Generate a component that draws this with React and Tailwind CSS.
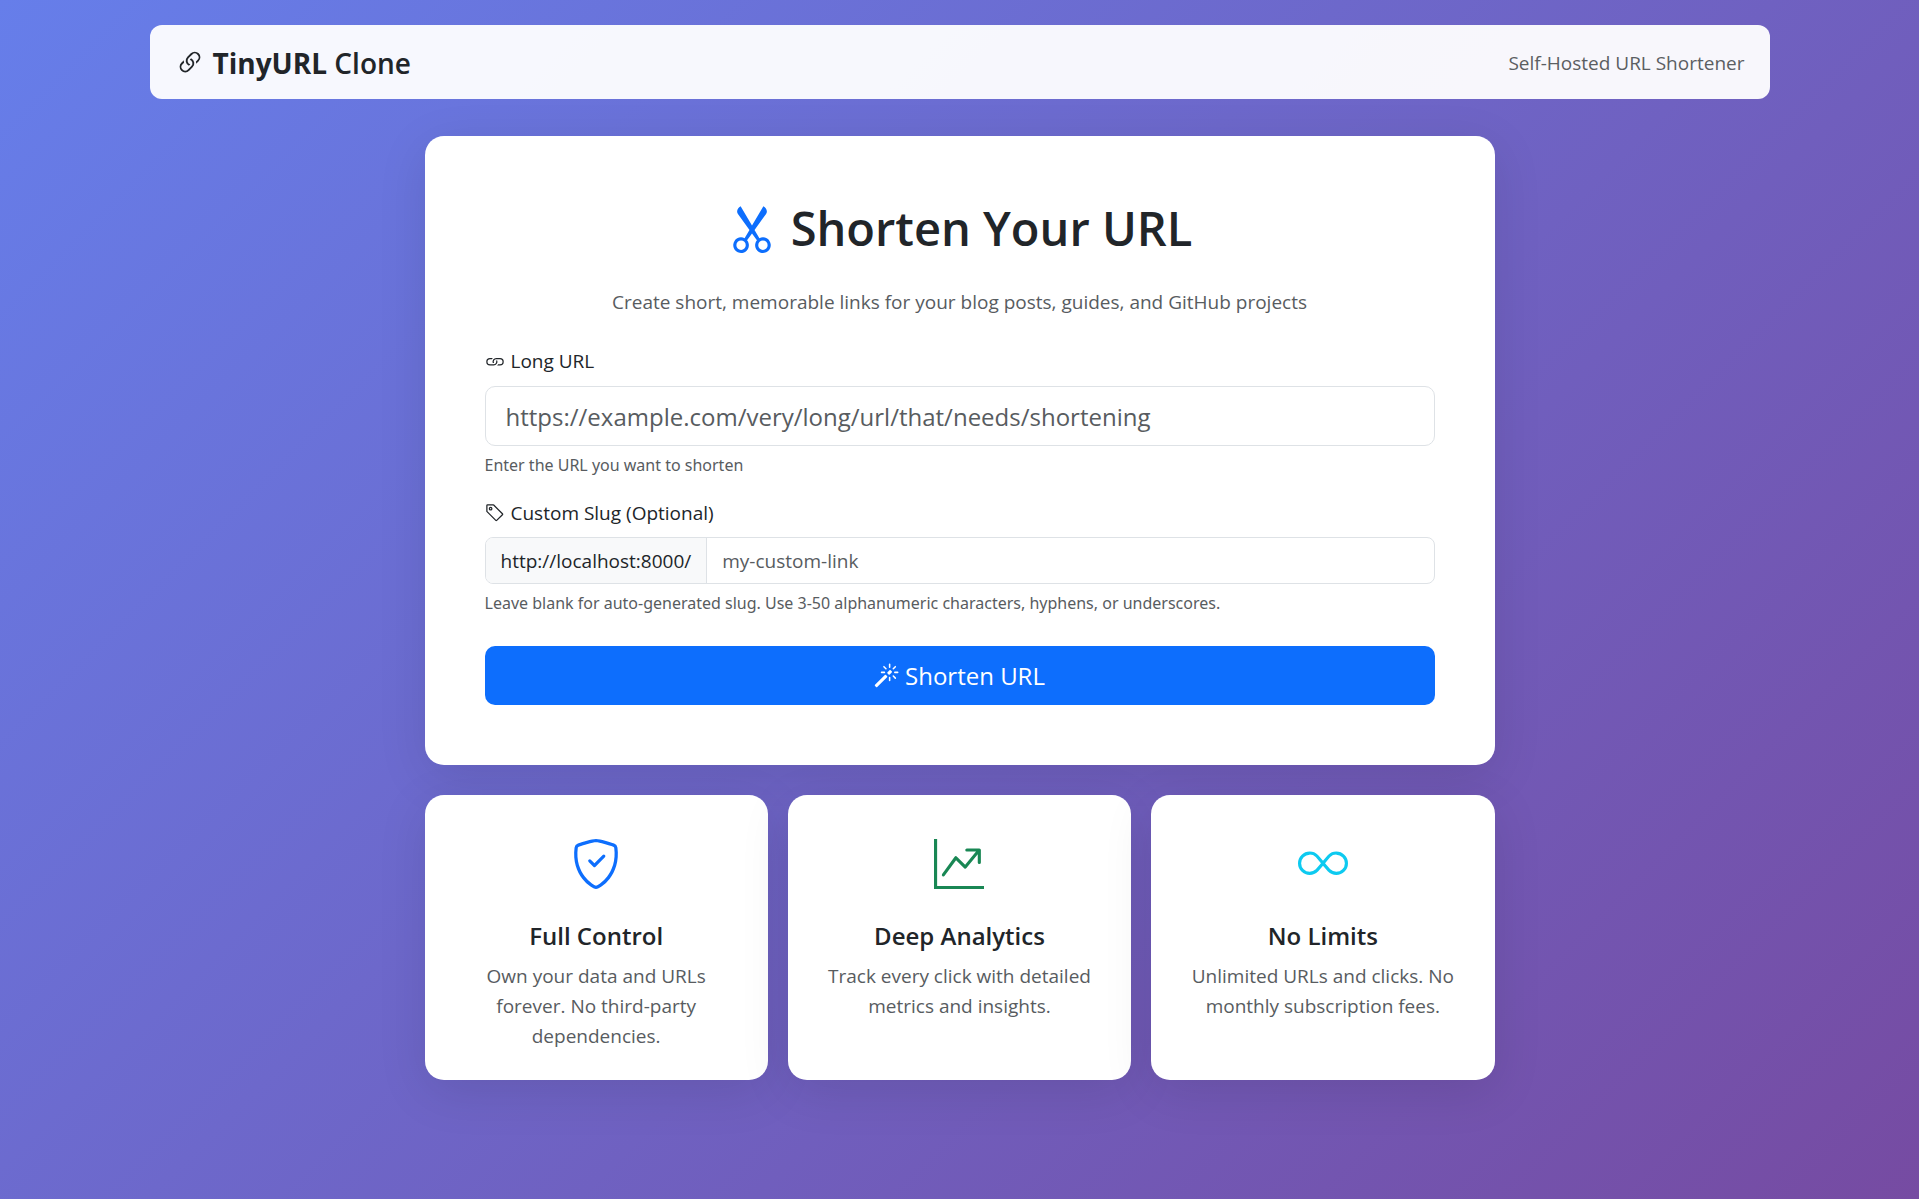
import { useState } from "react";
import {
  BsGraphUpArrow,
  BsInfinity,
  BsLink,
  BsLink45Deg,
  BsMagic,
  BsScissors,
  BsShieldCheck,
  BsTag,
} from "react-icons/bs";

const features = [
  {
    title: "Full Control",
    text: "Own your data and URLs forever. No third-party dependencies.",
    icon: BsShieldCheck,
    color: "text-[#0d6efd]",
  },
  {
    title: "Deep Analytics",
    text: "Track every click with detailed metrics and insights.",
    icon: BsGraphUpArrow,
    color: "text-[#198754]",
  },
  {
    title: "No Limits",
    text: "Unlimited URLs and clicks. No monthly subscription fees.",
    icon: BsInfinity,
    color: "text-[#0dcaf0]",
  },
];

function Header() {
  return (
    <header className="mx-auto flex w-full max-w-[1620px] items-center justify-between rounded-xl bg-white/95 px-[25px] pt-4 pb-[14px]">
      <a href="/" className="flex items-center gap-2 text-[28px] leading-[44px] font-semibold">
        <BsLink45Deg className="size-[30px]" />
        <span>
          <strong className="font-bold">TinyURL</strong> Clone
        </span>
      </a>
      <span className="text-[#5b5e62]">Self-Hosted URL Shortener</span>
    </header>
  );
}

function ShortenForm() {
  const [url, setUrl] = useState("");
  const [slug, setSlug] = useState("");

  return (
    <section className="rounded-[19px] bg-white p-[60px] shadow-[0_12px_50px_rgba(0,0,0,0.1)]">
      <h1 className="flex items-center justify-center gap-[14px] text-[47px] leading-[64px] font-semibold">
        <BsScissors className="size-[50px] text-[#0d6efd]" />
        Shorten Your URL
      </h1>
      <p className="mt-[27px] mb-[29px] text-center text-[#585c5f]">
        Create short, memorable links for your blog posts, guides, and GitHub projects
      </p>

      <form onSubmit={(e) => e.preventDefault()}>
        <label htmlFor="url" className="mb-[10px] flex items-center gap-[6px]">
          <BsLink className="size-[20px]" /> Long URL
        </label>
        <input
          id="url"
          type="url"
          value={url}
          onChange={(e) => setUrl(e.target.value)}
          placeholder="https://example.com/very/long/url/that/needs/shortening"
          className="block h-[60px] w-full rounded-[10px] border border-[#dee2e6] px-[20px] text-[24px] placeholder:text-[#585c5f]"
        />
        <p className="mt-[6px] mb-[20px] font-['Noto_Sans','Open_Sans',sans-serif] text-[16px] leading-[26px] text-[#585c5f]">
          Enter the URL you want to shorten
        </p>

        <label htmlFor="slug" className="mb-[9px] flex items-center gap-[6px]">
          <BsTag className="size-[20px]" /> Custom Slug (Optional)
        </label>
        <div className="flex h-[47px] overflow-hidden rounded-lg border border-[#dee2e6]">
          <span className="flex items-center border-r border-[#dee2e6] bg-[#f8f9fa] px-[15px]">
            http://localhost:8000/
          </span>
          <input
            id="slug"
            type="text"
            value={slug}
            onChange={(e) => setSlug(e.target.value)}
            placeholder="my-custom-link"
            className="min-w-0 flex-1 px-[15px] placeholder:text-[#585c5f]"
          />
        </div>
        <p className="mt-[6px] mb-[30px] font-['Noto_Sans','Open_Sans',sans-serif] text-[16px] leading-[26px] text-[#585c5f]">
          Leave blank for auto-generated slug. Use 3-50 alphanumeric characters, hyphens, or underscores.
        </p>

        <button
          type="submit"
          className="flex h-[59px] w-full items-center justify-center gap-[6px] rounded-[10px] bg-[#0d6efd] text-[24px] text-white"
        >
          <BsMagic className="size-[25px]" /> Shorten URL
        </button>
      </form>
    </section>
  );
}

function FeatureCard({ title, text, icon: Icon, color }) {
  return (
    <article className="rounded-[19px] bg-white px-[30px] pt-[30px] pb-[29px] text-center shadow-[0_12px_50px_rgba(0,0,0,0.1)]">
      <Icon className={`mx-auto mt-[14px] mb-[32px] size-[50px] ${color}`} />
      <h2 className="mb-[10px] text-[24px] leading-[30px] font-semibold">{title}</h2>
      <p className="text-[#585c5f]">{text}</p>
    </article>
  );
}

export default function App() {
  return (
    <div className="min-h-screen bg-[linear-gradient(135deg,#667eea_0%,#764ba2_100%)] px-4 py-[25px] font-['Open_Sans','Noto_Sans',sans-serif] text-[19px] leading-[30px] text-[#212529]">
      <Header />
      <main className="mx-auto mt-[37px] w-full max-w-[1070px]">
        <ShortenForm />
        <div className="mt-[30px] grid grid-cols-1 gap-[20px] md:grid-cols-3">
          {features.map((feature) => (
            <FeatureCard key={feature.title} {...feature} />
          ))}
        </div>
      </main>
    </div>
  );
}
